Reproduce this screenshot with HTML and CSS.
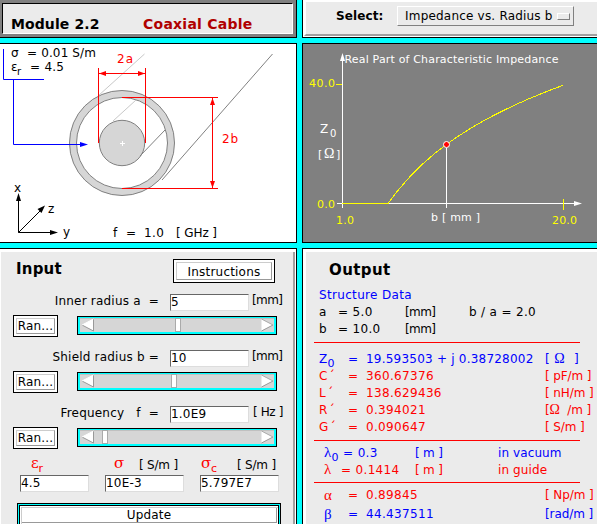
FILE: index.html
```html
<!DOCTYPE html>
<html lang="en">
<head>
<meta charset="utf-8">
<title>Module 2.2 Coaxial Cable</title>
<link rel="stylesheet" href="styles.css">
</head>
<body>
<main class="app">
  <header class="title-frame"><div class="title-inner"><h1>Module 2.2</h1><h1 class="subject">Coaxial Cable</h1></div></header>

  <section class="select-bar"><div class="select-face"><b>Select:</b><button class="choice"><span>Impedance vs. Radius b</span><i></i></button></div></section>

  <section class="diagram">
    <svg width="296" height="198" viewBox="0 44 296 198">
      <g stroke="#808080" fill="#d6d6d6">
        <circle cx="122" cy="143" r="52.5"/>
        <circle cx="122" cy="143" r="45.5" fill="#fff"/>
        <path d="M98 96L144.500 54M113 121L136 100" stroke="#c8c8c8" fill="none"/>
        <circle cx="122" cy="143" r="22.700"/>
        <path d="M140 156L165 130M162 180L272.500 54" fill="none"/>
      </g>
      <path d="M120 143.500h5M122.500 141v5" stroke="#fff"/>
      <g stroke="#f00" fill="none"><path d="M98.500 68v75M145.500 68v75M98.500 73.500h47M122 97.500h96M122 188.500h96M212.500 98v90"/></g>
      <path fill="#f00" d="M99 73.500l7-2.500v5zM145 73.500l-7-2.500v5zM212.500 98l-2.500 7h5zM212.500 188l-2.500-7h5z"/>
      <path d="M3.500 49v30.500H44M13.500 79.500v65H82" stroke="#00f" fill="none"/>
      <path d="M88 144.500l-8-2.500v5z" fill="#00f"/>
      <path d="M18.500 196v36.500H53M18.500 232.500L42 209" stroke="#000" fill="none"/>
      <path d="M18.500 193l-2.500 8h5zM58 232.500l-8-2.500v5zM45 205.500l-7.500 3.500 4 4z"/>
      <text x="11" y="57">σ</text><text x="27" y="57" textLength="69" xml:space="preserve">= 0.01 S/m</text>
      <text x="11" y="71">ε</text><text x="17" y="75" class="sub">r</text><text x="30" y="71" textLength="34">= 4.5</text>
      <g fill="#f00"><text x="117" y="63" textLength="16">2a</text><text x="222" y="143" textLength="16">2b</text></g>
      <text x="14" y="192">x</text><text x="48" y="213">z</text><text x="63" y="236">y</text>
      <text x="113" y="237">f</text><text x="126" y="237">=</text><text x="144" y="237" textLength="20">1.0</text><text x="176" y="237" textLength="41">[ GHz ]</text>
    </svg>
  </section>

  <section class="plot">
    <svg width="294" height="198" viewBox="303 44 294 198">
      <path d="M342.500 58v150M337 203.500H576M446.500 148v60" stroke="#fff" fill="none"/>
      <path d="M342.500 53l-2.500 8h5zM582 203.500l-8-2.500v5z" fill="#fff"/>
      <path d="M336 84.500h6M563.500 199v11M342 203.500H388L394 195.400 400 188 411.600 174.800 423.200 163.500 434.800 153.400 446.500 144.400 458.100 136.300 469.700 128.900 481.300 122.100 493 115.800 504.600 109.900 516.300 104.400 527.900 99.200 539.500 94.400 551.100 89.800 562.800 85.400" stroke="#ff0" fill="none" shape-rendering="crispEdges"/>
      <circle cx="446.500" cy="144.500" r="3" fill="#f00" stroke="#fff"/>
      <g fill="#fff"><text class="small" x="344.500" y="63" textLength="214">Real Part of Characteristic Impedance</text>
      <text x="320" y="133">Z</text><text x="330" y="137" class="sub">0</text><text class="small" x="318" y="158">[</text><text class="omega" x="324" y="158">Ω</text><text class="small" x="336" y="158">]</text><text class="small" x="431" y="221" textLength="49">b [ mm ]</text></g>
      <g fill="#ff0" class="small"><text x="309" y="87" textLength="26">40.0</text><text x="317" y="208" textLength="18">0.0</text><text x="336" y="224" textLength="18">1.0</text><text x="552" y="224" textLength="25">20.0</text></g>
    </svg>
  </section>

  <section class="panel input-panel">
    <div class="heading"><h2>Input</h2><button class="push instructions"><span>Instructions</span></button></div>
    <div class="parameter">
      <div class="entry"><label>Inner radius a&nbsp; =</label><input value="5"><span class="mm">[mm]</span></div>
      <div class="adjust"><button class="push"><span>Ran...</span></button><div class="scroll"><svg width="194" height="14"><use href="#track"/><rect x="95.500" y=".5" width="5" height="13" fill="#fff" stroke="#aaa"/></svg></div></div>
    </div>
    <div class="parameter">
      <div class="entry"><label>Shield radius b =</label><input value="10"><span class="mm">[mm]</span></div>
      <div class="adjust"><button class="push"><span>Ran...</span></button><div class="scroll"><svg width="194" height="14"><use href="#track"/><rect x="91.500" y=".5" width="5" height="13" fill="#fff" stroke="#aaa"/></svg></div></div>
    </div>
    <div class="parameter">
      <div class="entry"><label>Frequency &nbsp; f&nbsp; =</label><input value="1.0E9"><span class="hz">[ Hz ]</span></div>
      <div class="adjust"><button class="push"><span>Ran...</span></button><div class="scroll"><svg width="194" height="14"><use href="#track"/><rect x="22.500" y=".5" width="5" height="13" fill="#fff" stroke="#aaa"/></svg></div></div>
    </div>
    <div class="materials">
      <label class="eps"><span><em>ε<sub>r</sub></em></span><input value="4.5"></label>
      <label class="sigma"><span><em>σ</em>[ S/m ]</span><input value="10E-3"></label>
      <label class="sigma-c"><span><em>σ<sub>c</sub></em>[ S/m ]</span><input value="5.797E7"></label>
    </div>
    <div class="update-frame"><button>Update</button></div>
    <svg width="0" height="0" class="defs"><defs><g id="track"><path d="M0 0H194" stroke="#aaa"/><path d="M13.500 1v12L2 7z" fill="#fff"/><path d="M13.500 1v12L2 7" fill="none" stroke="#999"/><path d="M13.500 1L2 7" stroke="#fff"/><path d="M181.500 1v12L193 7z" fill="#fff"/><path d="M181.500 13L193 7" stroke="#999"/><path d="M181.500 1L193 7" stroke="#aaa"/></g></defs></svg>
  </section>

  <section class="panel output-panel">
    <h2>Output</h2>
    <div class="structure">
      <p class="blue">Structure Data</p>
      <p><span>a</span><span>= 5.0</span><span class="mm">[mm]</span><span>b / a = 2.0</span></p>
      <p><span>b</span><span>= 10.0</span><span class="mm">[mm]</span></p>
    </div>
    <hr>
    <div class="values line-values">
      <p class="blue"><span>Z<sub>0</sub></span><span>=</span><span>19.593503 + j 0.38728002</span><span>[ <i class="omega">Ω</i>&nbsp; ]</span></p>
      <p><span>C ´</span><span>=</span><span>360.67376</span><span>[ pF/m ]</span></p>
      <p><span>L ´</span><span>=</span><span>138.629436</span><span>[ nH/m ]</span></p>
      <p><span>R ´</span><span>=</span><span>0.394021</span><span>[<i class="omega">Ω</i>&nbsp; /m ]</span></p>
      <p><span>G ´</span><span>=</span><span>0.090647</span><span>[ S/m ]</span></p>
    </div>
    <hr>
    <div class="waves">
      <p class="blue"><span><i class="greek">λ</i><sub>0</sub> = 0.3</span><span>[ m ]</span><span>in vacuum</span></p>
      <p><span><i class="greek wide">λ</i>= 0.1414</span><span>[ m ]</span><span>in guide</span></p>
    </div>
    <hr>
    <div class="values propagation">
      <p><span class="greek">α</span><span>=</span><span>0.89845</span><span>[ Np/m ]</span></p>
      <p class="blue"><span class="greek">β</span><span>=</span><span>44.437511</span><span>[rad/m ]</span></p>
    </div>
  </section>
</main>
</body>
</html>
```
FILE: styles.css
```css
* { box-sizing: border-box; }
body { margin: 0; overflow: hidden; }
h1, h2, p, button { margin: 0; }
i, em { font-style: normal; }
.app {
  width: 602px; height: 524px; overflow: hidden; background: #0ff; color: #000;
  font: 12px/17px "DejaVu Sans", sans-serif; letter-spacing: .2px;
  display: grid; grid-template-columns: 297px 300px; grid-template-rows: 38px 200px 276px; gap: 5px;
}
button, input { font: inherit; letter-spacing: inherit; color: #000; border-radius: 0; padding: 0; }
svg { display: block; }
svg text { font-size: 12px; letter-spacing: 0; }
svg .small, svg .small text { font-size: 11px; }
svg .sub { font-size: 10px; }
svg .omega { font-size: 14px; }

.title-frame { background: #808080; border: solid #000; border-width: 0 1px 1px 0; padding: 3px 3px 3px 2px; }
.title-inner { height: 31px; background: #ebebeb; border: 1px solid; border-color: #000 #fff #fff #000; display: flex; padding: 11px 0 0 8px; }
h1 { font-size: 14px; line-height: 18px; letter-spacing: .1px; width: 132px; white-space: nowrap; }
.subject { color: #b00000; letter-spacing: .25px; }

.select-bar { border: solid #000; border-width: 0 0 1px 1px; background: #fff; padding: 2px 0 1px 1px; }
.select-face { height: 34px; border-left: 2px solid #fff; border-bottom: 2px solid #a0a0a0; background: #ebebeb; display: flex; padding: 4px 0 0 30px; }
.select-face b { width: 61px; line-height: 21px; letter-spacing: .1px; }
.choice { width: 177px; height: 20px; border: 1px solid; border-color: #fff #808080 #808080 #fff; background: #ebebeb; display: flex; padding-left: 7px; align-items: center; white-space: nowrap; }
.choice span { width: 152px; text-align: left; }
.choice i { width: 13px; height: 7px; border: 1px solid; border-color: #fff #808080 #808080 #fff; }

.diagram { border: solid #000; border-width: 1px 1px 1px 0; background: #fff; }
.plot { border: solid #000; border-width: 1px 0 1px 1px; background: #808080; }
.omega, .greek { font-family: "Liberation Serif", serif; font-size: 14px; line-height: 1; }

.panel { background: #ebebeb; border: solid #000; overflow: hidden; }
.input-panel { border-width: 1px 1px 0 0; box-shadow: inset 0 3px #fff, inset 1px 0 #fff, inset -1px 0 #fff, inset -3px 0 #a0a0a0; padding: 10px 0 0 13px; }
h2 { font-size: 15px; line-height: 20px; letter-spacing: .2px; }
.heading { display: flex; height: 34px; padding-left: 3px; }
.push { border: 1px solid #000; background: #fff; padding: 2px; width: 45px; height: 22px; white-space: nowrap; }
.push span { display: block; height: 100%; border: 1px solid; border-color: #ccc #999 #999 #ccc; line-height: 15px; }
.heading h2 { width: 157px; }
.instructions { width: 102px; height: 24px; }
.instructions span { line-height: 18px; }
.parameter { height: 56px; padding-top: 1px; }
.entry { display: flex; height: 21px; }
.entry label { width: 146px; text-align: right; line-height: 14px; white-space: nowrap; letter-spacing: .2px; }
input { display: block; width: 79px; height: 17px; border: 1px solid; border-color: #666 #ddd #ddd #666; background: #fff; outline: none; }
.entry input { margin-left: 11px; }
.entry .mm, .entry .hz { margin-left: 3px; line-height: 12px; }
.panel .mm { letter-spacing: -.6px; }
.entry .hz { margin-left: 4px; letter-spacing: -.4px; }
.adjust { display: flex; gap: 19px; }
.scroll { width: 200px; height: 19px; margin-top: 1px; border: 1px solid #000; padding: 1px 2px 2px; background: #0ff; }
.scroll svg { background: #d6d6d6; }
.materials { display: flex; gap: 16px; padding: 0 0 0 7px; height: 42px; }
.materials label { width: 79px; display: block; white-space: nowrap; letter-spacing: -.2px; }
.materials input { letter-spacing: .2px; }
.materials .eps { width: 69px; }
.eps input { width: 69px; }
.materials span { display: flex; height: 19px; line-height: 19px; margin: -5px 0 0; }
.materials em { color: #f00; font-family: "DejaVu Serif", serif; font-size: 15px; line-height: 15px; width: 25px; margin-left: 9px; }
.materials .eps em { margin-left: 11px; }
.materials .sigma-c em { width: 36px; margin-left: 1px; }
sub { font: 11px/1 "DejaVu Sans", sans-serif; vertical-align: -4px; }
.update-frame { width: 264px; height: 22px; margin: 0 0 0 4px; border: 1px solid #000; border-bottom: 0; background: #0ff; padding: 1px 1px 0; }
.update-frame button { display: block; width: 260px; height: 19px; border: 1px solid #000; border-bottom: 0; background: #fff; box-shadow: inset 1px 1px #fff, inset 2px 2px #ccc, inset -1px -1px #fff, inset -2px -2px #999; padding: 2px 0; line-height: 14px; }

.output-panel { border-width: 1px 0 0 1px; box-shadow: inset 3px 3px #fff; padding: 11px 0 0 11px; }
.output-panel h2 { padding-left: 15px; height: 27px; letter-spacing: .4px; }
.output-panel { letter-spacing: .33px; }
.output-panel p { display: grid; height: 17px; white-space: nowrap; color: #f00; }
.output-panel p.blue { color: #00f; }
.output-panel hr { width: 266px; height: 1px; border: 0; background: #f00; margin: 4px 0 0; }
.structure { padding-left: 5px; }
.output-panel .structure p { grid-template-columns: 19px 67px 64px auto; color: #000; }
.output-panel .structure p.blue { display: block; color: #00f; }
.values { padding-left: 5px; }
.values p { grid-template-columns: 29px 18px 179px auto; }
.values p span:first-child { word-spacing: -3px; }
.values p span:last-child { letter-spacing: -.1px; }
.line-values { padding-top: 8px; }
.line-values p:first-child span:nth-child(3) { letter-spacing: .22px; }
.line-values p:first-child span:last-child { word-spacing: 1px; }
.waves { padding: 4px 0 0 10px; height: 37px; }
.waves p { grid-template-columns: 91px 83px auto; }
.waves p span:nth-child(2) { letter-spacing: -.2px; }
.waves p span:nth-child(3) { letter-spacing: .1px; }
.wide { display: inline-block; width: 17px; }
.propagation { padding-top: 4px; }
.propagation p + p { margin-top: 2px; }
.propagation p .greek { padding-left: 5px; line-height: 17px; }
.output-panel .greek { font-size: 15px; }
.defs { display: none; }
```
